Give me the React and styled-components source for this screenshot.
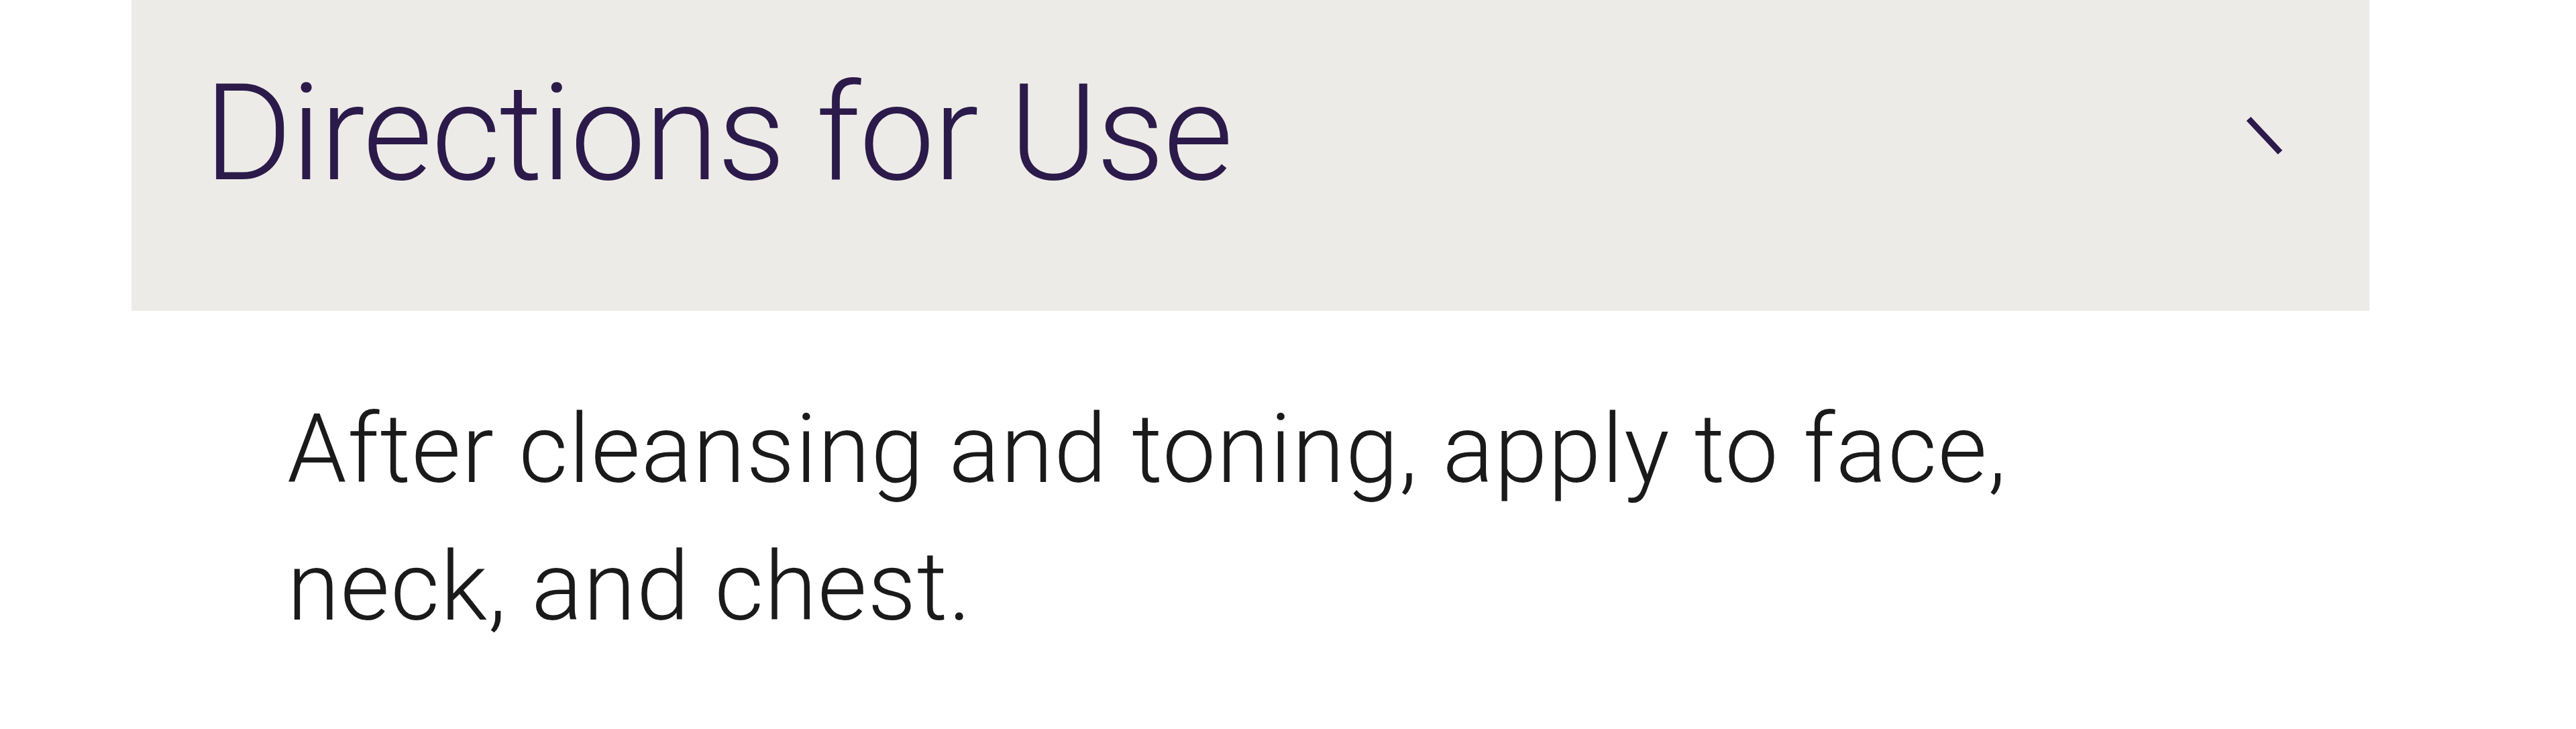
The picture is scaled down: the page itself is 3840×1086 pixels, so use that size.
import React from 'react';
import styled, { createGlobalStyle } from 'styled-components';

const GlobalStyle = createGlobalStyle`
  body {
    margin: 0;
    background: #ffffff;
    font-family: Roboto, "Liberation Sans", sans-serif;
  }
`;

const Page = styled.div`
  padding-left: 196px;
  width: 3336px;
`;

const Header = styled.div`
  display: flex;
  justify-content: space-between;
  align-items: center;
  height: 463px;
  box-sizing: border-box;
  padding: 0 128px 66px 108px;
  background: #edebe7;
`;

const Title = styled.h2`
  margin: 0;
  font-size: 201px;
  font-weight: 300;
  line-height: 1;
  color: #2b1a4a;
  letter-spacing: -2px;
`;

const Toggle = styled.button`
  display: flex;
  border: 0;
  padding: 0;
  margin-top: 6px;
  background: none;
  cursor: pointer;
`;

const Body = styled.p`
  margin: 104px 0 0 232px;
  max-width: 2700px;
  font-size: 142px;
  font-weight: 300;
  line-height: 205px;
  letter-spacing: 1.3px;
  color: #1a1a1a;
`;

export default function App() {
  return (
    <>
      <GlobalStyle />
      <Page>
        <Header>
          <Title>Directions for Use</Title>
          <Toggle aria-label="Toggle">
            <svg width="56" height="58" viewBox="0 0 56 58">
              <line x1="4" y1="4" x2="51" y2="54" stroke="#2b1a4a" strokeWidth="9" />
            </svg>
          </Toggle>
        </Header>
        <Body>After cleansing and toning, apply to face, neck, and chest.</Body>
      </Page>
    </>
  );
}
